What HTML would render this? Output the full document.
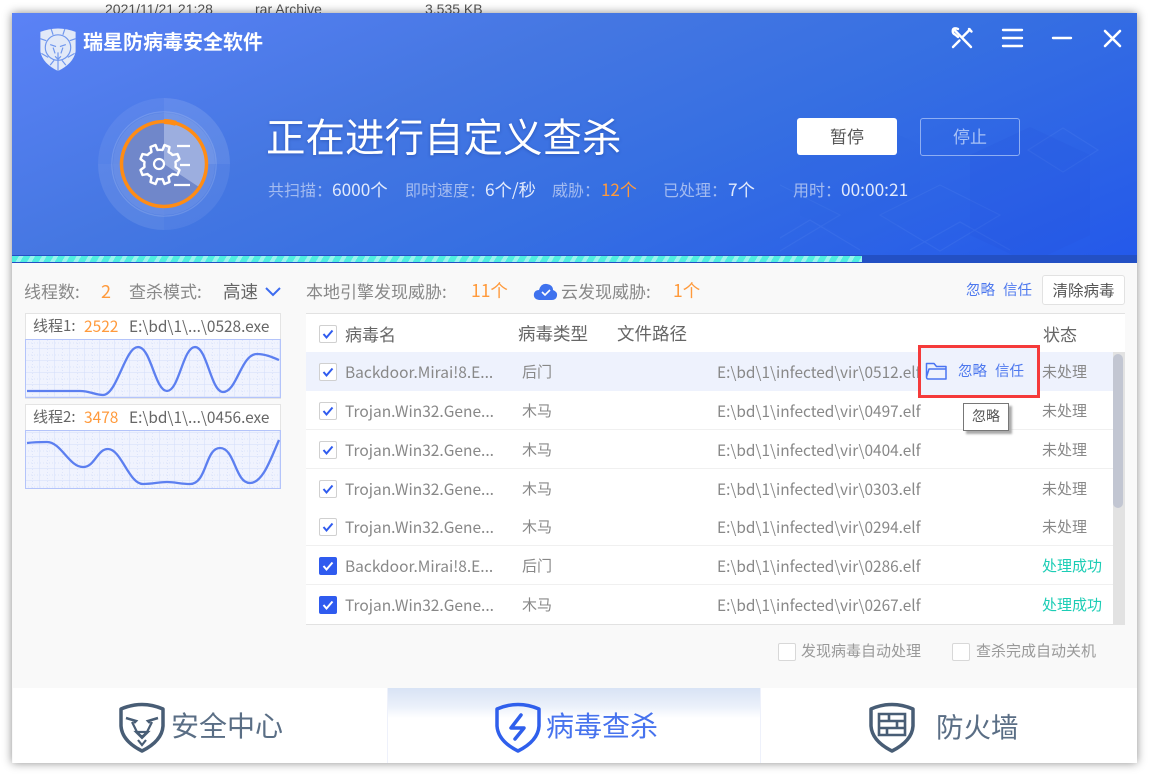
<!DOCTYPE html>
<html lang="zh"><head><meta charset="utf-8"><title>瑞星防病毒安全软件</title>
<style>
html,body{margin:0;padding:0;background:#fff;width:1150px;height:775px;overflow:hidden}
body{position:relative;font-family:"Liberation Sans","Noto Sans CJK SC",sans-serif}
.t{position:absolute;white-space:nowrap;line-height:20px;font-size:15px;color:#888;font-family:"Noto Sans CJK SC","Liberation Sans",sans-serif}
.b{position:absolute}
.o{color:#ff9a3c}.bl{color:#4d78ee}.d{color:#666}.g{color:#1ccdb5}
.l{font-size:17px}
.h{font-size:17px;color:#666}
.n{font-size:15.500px}
.p{font-size:15.400px}
.s{font-size:16px;color:#a3bbf0}
.v{font-size:17.300px;color:#e2eafc}
.row{position:absolute;left:306px;width:807px;height:38px;background:#fff;border-bottom:1px solid #f0f0f0}
.cb{position:absolute;left:319px;width:16px;height:16px;border:1px solid #d0d0d0;border-radius:2px;background:#fff}
.cb svg{position:absolute;left:1px;top:1px}
.cb.on{background:#2f5bef;border-color:#2f5bef}
</style></head><body>
<div class="t" style="left:105px;top:-1px;color:#555;font-size:14px;font-family:'Liberation Sans',sans-serif">2021/11/21 21:28</div>
<div class="t" style="left:255px;top:-1px;color:#555;font-size:14px;font-family:'Liberation Sans',sans-serif">rar Archive</div>
<div class="t" style="left:425px;top:-1px;color:#555;font-size:14px;font-family:'Liberation Sans',sans-serif">3,535 KB</div>

<div class="b" style="left:12px;top:13px;width:1125px;height:750px;background:#f9f9f9;box-shadow:0 0 9px rgba(0,0,0,.45)"></div>
<div class="b" style="left:12px;top:13px;width:1125px;height:242px;background:linear-gradient(157deg,#5b82f6 0%,#4577e2 35%,#366fe2 60%,#2459ea 100%)"></div>

<svg class="b" style="left:780px;top:85px" width="357" height="170" fill="none" stroke="#7ba2f6" stroke-opacity=".12">
<path d="M-50 130L0 100l60 30-60 36zM100 130l60-30 60 30-60 36zM248 65l35-22 35 22-35 22zM-20 165l50-30 50 30M130 165l50-28 50 28" stroke-width="1.200"/>
<path d="M20 60l60-28 60 28v70l-60 28-60-28z" fill="#2e66df" fill-opacity=".2" stroke="none"/>
<path d="M190 90v-20l60-28 60 28v80l-60 28-60-28z" fill="#2552d8" fill-opacity=".16" stroke="none"/>
</svg>

<!-- logo -->
<svg class="b" style="left:38px;top:27px" width="40" height="45" viewBox="0 0 40 46">
<path d="M2 5Q20-2 38 5V25Q36 37 20 45Q4 37 2 25z" fill="#e2e9f8"/>
<circle cx="20" cy="21" r="13" fill="none" stroke="#7097ee" stroke-width="1.200"/>
<path d="M12 18l6 2M28 18l-6 2M17 30l3 3 3-3M20 26v6M15 21l2 6M25 21l-2 6" stroke="#7097ee" stroke-width="1.200" fill="none"/>
<path d="M2 12L8 14M38 12L32 14M13 2L15 8M27 2L25 8M3 27L10 31M37 27L30 31M12 39L16 34M28 39L24 34M20 34V45" stroke="#7097ee" stroke-width="1.200"/>
</svg>
<div class="t" style="left:83px;top:26px;color:#fff;font-size:20px;line-height:30px;font-weight:700">瑞星防病毒安全软件</div>

<!-- window icons -->
<svg class="b" style="left:950px;top:26px" width="175" height="24" fill="none" stroke="#fff" stroke-width="2.400" stroke-linecap="round">
<path d="M4 3.500L21 21M20 3.500L13 10.500M3 21L9.500 14.500M19 3L21.500 5.500" />
<path d="M3 3.500Q2 7 5 8.500L8 11M8 3Q4 1.500 3 3.500"/>
<path d="M53 4H72M53 12H72M53 20H72"/>
<path d="M103 12H121"/>
<path d="M155 5L170 20M170 5L155 20" stroke-width="2.600"/>
</svg>

<!-- scan ring -->
<svg class="b" style="left:94px;top:94px" width="140" height="140" viewBox="0 0 140 140" fill="none">
<circle cx="70" cy="70" r="66" fill="#fff" fill-opacity=".07"/>
<path d="M70 4A66 66 0 0 1 136 70H70z" fill="#fff" fill-opacity=".05"/>
<path d="M4 70A66 66 0 0 0 70 136V70z" fill="#fff" fill-opacity=".03"/>
<circle cx="70" cy="70" r="52" fill="#4272dd" fill-opacity=".5" stroke="#fff" stroke-opacity=".16" stroke-width="1.500"/>
<circle cx="70" cy="70" r="47" stroke="#fff" stroke-opacity=".14" stroke-width="8"/>
<path d="M70 18A52 52 0 0 1 122 70H70z" fill="#fff" fill-opacity=".06"/>
<circle cx="70" cy="70" r="42" fill="#7087ca"/>
<path d="M70 28A42 42 0 0 1 105 93L70 70z" fill="#a3b5e3" fill-opacity=".85"/>
<circle cx="70" cy="70" r="42.500" stroke="#ff8c14" stroke-width="3.500"/>
<path d="M70 27.500A42.500 42.500 0 0 1 82 29.300" stroke="#ff8c14" stroke-width="5"/>
<path d="M62 51l2 5a14 14 0 0 1 5 0l2-5 5 2-1 5a14 14 0 0 1 4 3l5-1 2 5-4 3a14 14 0 0 1 0 5l4 3-2 5-5-1a14 14 0 0 1-4 3l1 5-5 2-2-5a14 14 0 0 1-5 0l-2 5-5-2 1-5a14 14 0 0 1-4-3l-5 1-2-5 4-3a14 14 0 0 1 0-5l-4-3 2-5 5 1a14 14 0 0 1 4-3l-1-5z" transform="translate(-.5 0)" stroke="#fff" stroke-width="2.400" stroke-linejoin="round"/>
<circle cx="65" cy="70" r="5" stroke="#fff" stroke-width="2.200"/>
<path d="M83 52H96M86 71H96M80 91H96" stroke="#fff" stroke-width="2.200"/>
</svg>

<div class="t" style="left:266px;top:109px;color:#fff;font-size:39.500px;line-height:54px;text-shadow:0 1px 3px rgba(20,50,130,.4)">正在进行自定义查杀</div>
<div class="t s" style="left:268px;top:179px">共扫描：</div>
<div class="t v" style="left:332px;top:179px">6000个</div>
<div class="t s" style="left:405px;top:179px">即时速度：</div>
<div class="t v" style="left:485px;top:179px">6个/秒</div>
<div class="t s" style="left:552px;top:179px">威胁：</div>
<div class="t" style="left:601px;top:179px;color:#ff9a3c;font-size:17px">12个</div>
<div class="t s" style="left:663px;top:179px">已处理：</div>
<div class="t v" style="left:728px;top:179px">7个</div>
<div class="t s" style="left:793px;top:179px">用时：</div>
<div class="t v" style="left:841px;top:179px">00:00:21</div>

<div class="b" style="left:797px;top:118px;width:100px;height:37px;background:#fff;border-radius:3px"></div>
<div class="t" style="left:797px;top:126px;width:100px;text-align:center;color:#555;font-size:17px">暂停</div>
<div class="b" style="left:920px;top:118px;width:98px;height:36px;border:1px solid #8eaef3;border-radius:3px"></div>
<div class="t" style="left:920px;top:126px;width:100px;text-align:center;color:#a9c2f6;font-size:17px">停止</div>

<!-- progress -->
<div class="b" style="left:12px;top:255px;width:1125px;height:8px;background:#2350c4"></div>
<div class="b" style="left:12px;top:256px;width:850px;height:6px;background:repeating-linear-gradient(120deg,#4feee0 0 6px,#9af5ee 6px 10px)"></div>

<!-- left -->
<div class="t l" style="left:24px;top:281px">线程数:</div>
<div class="t o" style="left:101px;top:281px;font-size:18px">2</div>
<div class="t l" style="left:129px;top:281px">查杀模式:</div>
<div class="t d" style="left:223px;top:282px;font-size:17.500px">高速</div>
<svg class="b" style="left:264px;top:285px" width="18" height="12" fill="none"><path d="M2 3l7 7 7-7" stroke="#3d6cf0" stroke-width="2"/></svg>

<svg class="b" style="left:25px;top:313px" width="256" height="176" viewBox="0 0 256 176">
<defs><pattern id="p" width="15" height="12" patternUnits="userSpaceOnUse"><path d="M15 0V12M0 12H15" stroke="#d2dcfa" stroke-width="1" fill="none"/><path d="M7.500 0V12M0 6H15" stroke="#dde4fb" stroke-width="1" stroke-dasharray="1 2" fill="none"/></pattern></defs>
<rect x=".5" y=".5" width="255" height="85" fill="#fff" stroke="#e4e4e4"/>
<rect x=".5" y="26.500" width="255" height="58" fill="#f0f3fe"/><rect x=".5" y="26.500" width="255" height="58" fill="url(#p)" stroke="#b4c4fa"/>
<path d="M2 78L55 78C65 78 70 82 78 82C92 82 100 34 113 34C126 34 130 78 142 78C154 78 158 34 170 34C182 34 186 79 198 79C212 79 216 41 232 41C240 41 247 44 254 47" fill="none" stroke="#5c7ff0" stroke-width="2.300"/>
<rect x=".5" y="91.500" width="255" height="84" fill="#fff" stroke="#e4e4e4"/>
<rect x=".5" y="117.500" width="255" height="58" fill="#f0f3fe"/><rect x=".5" y="117.500" width="255" height="58" fill="url(#p)" stroke="#b4c4fa"/>
<path d="M2 130C10 129 15 129 22 129C36 129 44 154 58 154C70 154 72 136 83 136C96 136 104 171 118 171C128 171 134 169 142 169C150 169 156 171 165 171C182 171 180 135 195 135C210 135 210 170 225 170C238 170 246 145 254 127" fill="none" stroke="#5c7ff0" stroke-width="2.300"/>
</svg>
<div class="t" style="left:33px;top:316px;font-size:15px;color:#666">线程1:</div>
<div class="t o" style="left:84px;top:316px;font-size:15.500px">2522</div>
<div class="t" style="left:129px;top:316px;font-size:15.400px;color:#666">E:\bd\1\...\0528.exe</div>
<div class="t" style="left:33px;top:407px;font-size:15px;color:#666">线程2:</div>
<div class="t o" style="left:84px;top:407px;font-size:15.500px">3478</div>
<div class="t" style="left:129px;top:407px;font-size:15.400px;color:#666">E:\bd\1\...\0456.exe</div>

<!-- top toolbar -->
<div class="t l" style="left:306px;top:281px">本地引擎发现威胁:</div>
<div class="t o" style="left:471px;top:281px;font-size:17.500px">11个</div>
<svg class="b" style="left:533px;top:282px" width="25" height="19"><path d="M6 18Q0 17 1 11.500Q2 8 6 8Q8 1 14 2Q20 3 20 8Q25 10 24 14Q23 18 19 18z" fill="#3f72ee"/><path d="M9 10l3 3 5-5" fill="none" stroke="#fff" stroke-width="1.600"/></svg>
<div class="t l" style="left:561px;top:281px">云发现威胁:</div>
<div class="t o" style="left:673px;top:281px;font-size:17.500px">1个</div>
<div class="t bl" style="left:966px;top:280px;font-size:14.500px">忽略</div>
<div class="t bl" style="left:1003px;top:280px;font-size:14.500px">信任</div>
<div class="b" style="left:1042px;top:275px;width:81px;height:28px;background:#fff;border:1px solid #e2e2e2;border-radius:3px"></div>
<div class="t" style="left:1042px;top:280px;width:83px;text-align:center;font-size:15.500px;color:#555">清除病毒</div>

<!-- table -->
<div class="b" style="left:306px;top:313px;width:819px;height:1px;background:#e2e2e2"></div>
<div class="b" style="left:306px;top:314px;width:819px;height:38px;background:#fff"></div>
<div class="row" style="top:352px;background:#eef2fd;border-color:#eef2fd"></div>
<div class="row" style="top:391px"></div>
<div class="row" style="top:430px"></div>
<div class="row" style="top:469px"></div>
<div class="row" style="top:507px"></div>
<div class="row" style="top:546px"></div>
<div class="row" style="top:585px;height:39px;border-color:#e2e2e2"></div>
<div class="b" style="left:306px;top:624px;width:819px;height:1px;background:#e2e2e2"></div>
<div class="b" style="left:1113px;top:352px;width:12px;height:272px;background:#e2e2e2"></div>
<div class="b" style="left:1113px;top:354px;width:10px;height:154px;background:#c2c6d2;border-radius:5px"></div>

<div class="cb" style="top:325px"><svg width="14" height="14" fill="none"><path d="M2.500 7l3 3.500 6-7" stroke="#2f5bef" stroke-width="2"/></svg></div>
<div class="t h" style="left:345px;top:324px">病毒名</div>
<div class="t h" style="left:518px;top:324px;font-size:17.500px">病毒类型</div>
<div class="t h" style="left:617px;top:324px;font-size:17.500px">文件路径</div>
<div class="t h" style="left:1043px;top:324px">状态</div>

<div class="cb" style="top:363px"><svg width="14" height="14" fill="none"><path d="M2.500 7l3 3.500 6-7" stroke="#2f5bef" stroke-width="2"/></svg></div>
<div class="cb" style="top:402px"><svg width="14" height="14" fill="none"><path d="M2.500 7l3 3.500 6-7" stroke="#2f5bef" stroke-width="2"/></svg></div>
<div class="cb" style="top:441px"><svg width="14" height="14" fill="none"><path d="M2.500 7l3 3.500 6-7" stroke="#2f5bef" stroke-width="2"/></svg></div>
<div class="cb" style="top:480px"><svg width="14" height="14" fill="none"><path d="M2.500 7l3 3.500 6-7" stroke="#2f5bef" stroke-width="2"/></svg></div>
<div class="cb" style="top:518px"><svg width="14" height="14" fill="none"><path d="M2.500 7l3 3.500 6-7" stroke="#2f5bef" stroke-width="2"/></svg></div>
<div class="cb on" style="top:557px"><svg width="14" height="14" fill="none"><path d="M2.500 7l3 3.500 6-7" stroke="#fff" stroke-width="2"/></svg></div>
<div class="cb on" style="top:596px"><svg width="14" height="14" fill="none"><path d="M2.500 7l3 3.500 6-7" stroke="#fff" stroke-width="2"/></svg></div>

<div class="t n" style="left:345px;top:362px">Backdoor.Mirai!8.E...</div><div class="t" style="left:522px;top:362px">后门</div><div class="t p" style="left:717px;top:362px">E:\bd\1\infected\vir\0512.elf</div><div class="t" style="left:1042px;top:362px">未处理</div>
<div class="t n" style="left:345px;top:401px">Trojan.Win32.Gene...</div><div class="t" style="left:522px;top:401px">木马</div><div class="t p" style="left:717px;top:401px">E:\bd\1\infected\vir\0497.elf</div><div class="t" style="left:1042px;top:401px">未处理</div>
<div class="t n" style="left:345px;top:440px">Trojan.Win32.Gene...</div><div class="t" style="left:522px;top:440px">木马</div><div class="t p" style="left:717px;top:440px">E:\bd\1\infected\vir\0404.elf</div><div class="t" style="left:1042px;top:440px">未处理</div>
<div class="t n" style="left:345px;top:479px">Trojan.Win32.Gene...</div><div class="t" style="left:522px;top:479px">木马</div><div class="t p" style="left:717px;top:479px">E:\bd\1\infected\vir\0303.elf</div><div class="t" style="left:1042px;top:479px">未处理</div>
<div class="t n" style="left:345px;top:517px">Trojan.Win32.Gene...</div><div class="t" style="left:522px;top:517px">木马</div><div class="t p" style="left:717px;top:517px">E:\bd\1\infected\vir\0294.elf</div><div class="t" style="left:1042px;top:517px">未处理</div>
<div class="t n" style="left:345px;top:556px">Backdoor.Mirai!8.E...</div><div class="t" style="left:522px;top:556px">后门</div><div class="t p" style="left:717px;top:556px">E:\bd\1\infected\vir\0286.elf</div><div class="t g" style="left:1042px;top:556px">处理成功</div>
<div class="t n" style="left:345px;top:595px">Trojan.Win32.Gene...</div><div class="t" style="left:522px;top:595px">木马</div><div class="t p" style="left:717px;top:595px">E:\bd\1\infected\vir\0267.elf</div><div class="t g" style="left:1042px;top:595px">处理成功</div>

<!-- highlight -->
<div class="b" style="left:918px;top:345px;width:116px;height:47px;border:3px solid #f53a3a;background:#eef2fd"></div>
<svg class="b" style="left:925px;top:361px" width="24" height="20" fill="none"><path d="M1.500 16V2.500H9L11.500 5.500H21V18H3.500Q1.500 18 1.500 16ZM1.500 16L4 8H21" stroke="#4a74f2" stroke-width="1.500" stroke-linejoin="round"/></svg>
<div class="t bl" style="left:958px;top:361px;font-size:14.500px">忽略</div>
<div class="t bl" style="left:995px;top:361px;font-size:14.500px">信任</div>
<div class="b" style="left:963px;top:403px;width:44px;height:26px;background:#fff;border:1px solid #777;box-shadow:3px 3px 2px #aaa"></div>
<div class="t" style="left:963px;top:406px;width:46px;text-align:center;font-size:14px;color:#555">忽略</div>

<!-- footer options -->
<div class="b" style="left:778px;top:643px;width:16px;height:16px;border:1px solid #d8d8d8;border-radius:2px;background:#fff"></div>
<div class="t" style="left:801px;top:641px;color:#999">发现病毒自动处理</div>
<div class="b" style="left:952px;top:643px;width:16px;height:16px;border:1px solid #d8d8d8;border-radius:2px;background:#fff"></div>
<div class="t" style="left:976px;top:641px;color:#999">查杀完成自动关机</div>

<!-- tabs -->
<div class="b" style="left:13px;top:688px;width:1124px;height:75px;background:#fff"></div>
<div class="b" style="left:387px;top:688px;width:374px;height:75px;background:linear-gradient(#d8e3f5 0,#eaf0fa 18px,#fff 30px);border-left:1px solid #eef1fb;border-right:1px solid #eef1fb;box-sizing:border-box"></div>

<svg class="b" style="left:118px;top:702px" width="48" height="52" viewBox="0 0 48 52" fill="none">
<path d="M3 7Q24-2 45 7V24Q44 39 24 49Q4 39 3 24z" stroke="#485d75" stroke-width="3.500" stroke-linejoin="round"/>
<path d="M8 16L18 19L16 21M40 16L30 19L32 21" stroke="#485d75" stroke-width="2.500"/>
<path d="M14 20L19 30L23 34H25L29 30L34 20M18 30H30L24 36ZM20 38L24 43L28 38" stroke="#485d75" stroke-width="2.200"/>
</svg>
<div class="t" style="left:171px;top:706px;font-size:28px;line-height:38px;color:#5a6e85">安全中心</div>

<svg class="b" style="left:494px;top:702px" width="48" height="52" viewBox="0 0 48 52" fill="none">
<path d="M3 7Q24-2 45 7V24Q44 39 24 49Q4 39 3 24z" stroke="#2f5fec" stroke-width="3.500" stroke-linejoin="round"/>
<path d="M27 13L17 26H30L21 37" stroke="#2f5fec" stroke-width="3.500" stroke-linecap="round" stroke-linejoin="round"/>
</svg>
<div class="t" style="left:546px;top:706px;font-size:28px;line-height:38px;color:#4773ee">病毒查杀</div>

<svg class="b" style="left:868px;top:702px" width="48" height="52" viewBox="0 0 48 52" fill="none">
<path d="M3 7Q24-2 45 7V24Q44 39 24 49Q4 39 3 24z" stroke="#485d75" stroke-width="3.500" stroke-linejoin="round"/>
<path d="M11 12H37V33H11zM11 19H37M11 26H37M21 12V19M29 19V26M19 26V33" stroke="#485d75" stroke-width="2.600"/>
</svg>
<div class="t" style="left:936px;top:706px;font-size:27.500px;line-height:38px;color:#5a6e85">防火墙</div>
</body></html>
